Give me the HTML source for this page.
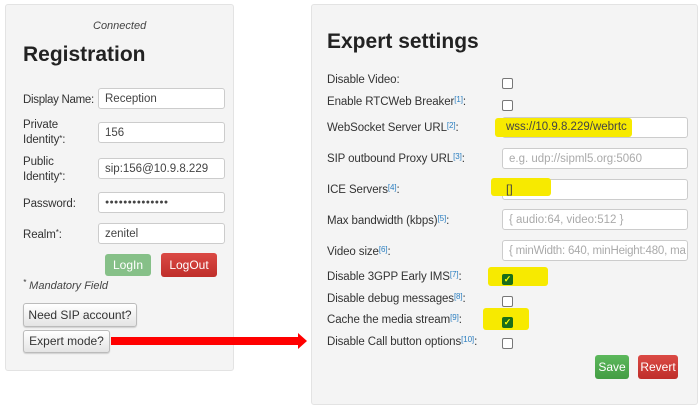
<!DOCTYPE html>
<html><head><style>
*{box-sizing:border-box;margin:0;padding:0}
body{width:700px;height:406px;background:#fff;position:relative;overflow:hidden;font-family:"Liberation Sans",Arial,sans-serif;color:#333;font-size:12px}
.a{position:absolute}
.panel{background:#f4f4f4;border:1px solid #e3e3e3;border-radius:3px}
.inp{position:absolute;background:#fff;border:1px solid #ccc;border-radius:3px;height:21px;padding-left:6px;line-height:20px;font-size:11.5px;color:#444;white-space:nowrap;overflow:hidden}
.ph{color:#aaa}
.lbl{position:absolute;font-size:11.5px;color:#333;line-height:14px;letter-spacing:-0.1px}
sup{font-size:8px;color:#2a7ec0;vertical-align:top;position:relative;top:-2px}
.cb{position:absolute;width:11px;height:11px;border:1px solid #777;border-radius:2px;background:#fff}
.cbk{position:absolute;width:11px;height:11px;background:#1a6e1a;border-radius:2px;color:#ff0;font-size:9px;line-height:11px;text-align:center;font-weight:bold}
.btn{position:absolute;border-radius:3px;font-size:12px;text-align:center;color:#fff}
.gb{position:absolute;background:linear-gradient(#fff,#e4e4e4);border:1px solid #bbb;border-radius:3px;color:#333;text-align:center;font-size:12px;box-shadow:0 1px 1px rgba(0,0,0,.15)}
.hl{position:absolute;background:#f7ea00;border-radius:3px}
</style></head><body>
<div class="a panel" style="left:5px;top:4px;width:229px;height:367px"></div>
<div class="a" style="left:93px;top:20px;font-style:italic;font-size:11px;color:#444">Connected</div>
<div class="a" style="left:23px;top:43px;font-size:21px;font-weight:bold;color:#222">Registration</div>
<div class="lbl" style="left:23px;top:93px;letter-spacing:-0.3px">Display Name:</div>
<div class="inp" style="left:98px;top:88px;width:127px">Reception</div>
<div class="lbl" style="left:23px;top:118px;line-height:15px">Private<br>Identity<sup style="color:#333">*</sup>:</div>
<div class="inp" style="left:98px;top:122px;width:127px">156</div>
<div class="lbl" style="left:23px;top:155px;line-height:15px">Public<br>Identity<sup style="color:#333">*</sup>:</div>
<div class="inp" style="left:98px;top:158px;width:127px">sip:156@10.9.8.229</div>
<div class="lbl" style="left:23px;top:197px">Password:</div>
<div class="inp" style="left:98px;top:192px;width:127px;font-size:7px;letter-spacing:0.3px">●●●●●●●●●●●●●●</div>
<div class="lbl" style="left:23px;top:228px">Realm<sup style="color:#333">*</sup>:</div>
<div class="inp" style="left:98px;top:223px;width:127px">zenitel</div>
<div class="btn" style="left:105px;top:254px;width:46px;height:22px;line-height:22px;background:#86c088">LogIn</div>
<div class="btn" style="left:161px;top:253px;width:56px;height:24px;line-height:24px;background:linear-gradient(#db4a45,#bf2e2a)">LogOut</div>
<div class="a" style="left:23px;top:280px;font-style:italic;font-size:11px;color:#444"><sup style="color:#333">*</sup> Mandatory Field</div>
<div class="gb" style="left:23px;top:303px;width:114px;height:24px;line-height:22px">Need SIP account?</div>
<div class="gb" style="left:23px;top:330px;width:87px;height:23px;line-height:21px">Expert mode?</div>
<div class="a" style="left:111px;top:337px;width:188px;height:8px;background:#f00"></div>
<div class="a" style="left:298px;top:333px;width:0;height:0;border-top:8px solid transparent;border-bottom:8px solid transparent;border-left:9px solid #f00"></div>

<div class="a panel" style="left:311px;top:4px;width:387px;height:401px"></div>
<div class="a" style="left:327px;top:30px;font-size:21px;font-weight:bold;color:#222">Expert settings</div>
<div class="lbl" style="left:327px;top:73px">Disable Video:</div>
<div class="cb" style="left:502px;top:78px"></div>
<div class="lbl" style="left:327px;top:95px">Enable RTCWeb Breaker<sup>[1]</sup>:</div>
<div class="cb" style="left:502px;top:100px"></div>
<div class="lbl" style="left:327px;top:121px">WebSocket Server URL<sup>[2]</sup>:</div>
<div class="inp" style="left:502px;top:117px;width:186px"></div>
<div class="hl" style="left:495px;top:118px;width:137px;height:19px"></div>
<div class="a" style="left:506px;top:121px;font-size:11.5px;color:#444">wss://10.9.8.229/webrtc</div>
<div class="lbl" style="left:327px;top:152px">SIP outbound Proxy URL<sup>[3]</sup>:</div>
<div class="inp ph" style="left:502px;top:148px;width:186px">e.g. udp://sipml5.org:5060</div>
<div class="lbl" style="left:327px;top:183px">ICE Servers<sup>[4]</sup>:</div>
<div class="inp" style="left:502px;top:179px;width:186px"></div>
<div class="hl" style="left:491px;top:178px;width:60px;height:18px"></div>
<div class="a" style="left:506px;top:182px;font-size:12px;color:#444">[]</div>
<div class="lbl" style="left:327px;top:214px">Max bandwidth (kbps)<sup>[5]</sup>:</div>
<div class="inp ph" style="left:502px;top:209px;width:186px">{ audio:64, video:512 }</div>
<div class="lbl" style="left:327px;top:245px">Video size<sup>[6]</sup>:</div>
<div class="inp ph" style="left:502px;top:240px;width:186px;letter-spacing:-0.2px">{ minWidth: 640, minHeight:480, ma</div>
<div class="lbl" style="left:327px;top:270px">Disable 3GPP Early IMS<sup>[7]</sup>:</div>
<div class="hl" style="left:488px;top:267px;width:60px;height:19px"></div>
<div class="cbk" style="left:502px;top:274px">✓</div>
<div class="lbl" style="left:327px;top:292px">Disable debug messages<sup>[8]</sup>:</div>
<div class="cb" style="left:502px;top:296px"></div>
<div class="lbl" style="left:327px;top:313px">Cache the media stream<sup>[9]</sup>:</div>
<div class="hl" style="left:483px;top:308px;width:46px;height:22px"></div>
<div class="cbk" style="left:502px;top:317px">✓</div>
<div class="lbl" style="left:327px;top:335px">Disable Call button options<sup>[10]</sup>:</div>
<div class="cb" style="left:502px;top:338px"></div>
<div class="btn" style="left:595px;top:355px;width:34px;height:24px;line-height:24px;background:linear-gradient(#5cb85c,#449d44)">Save</div>
<div class="btn" style="left:638px;top:355px;width:40px;height:24px;line-height:24px;background:linear-gradient(#db4a45,#bf2e2a)">Revert</div>
</body></html>
